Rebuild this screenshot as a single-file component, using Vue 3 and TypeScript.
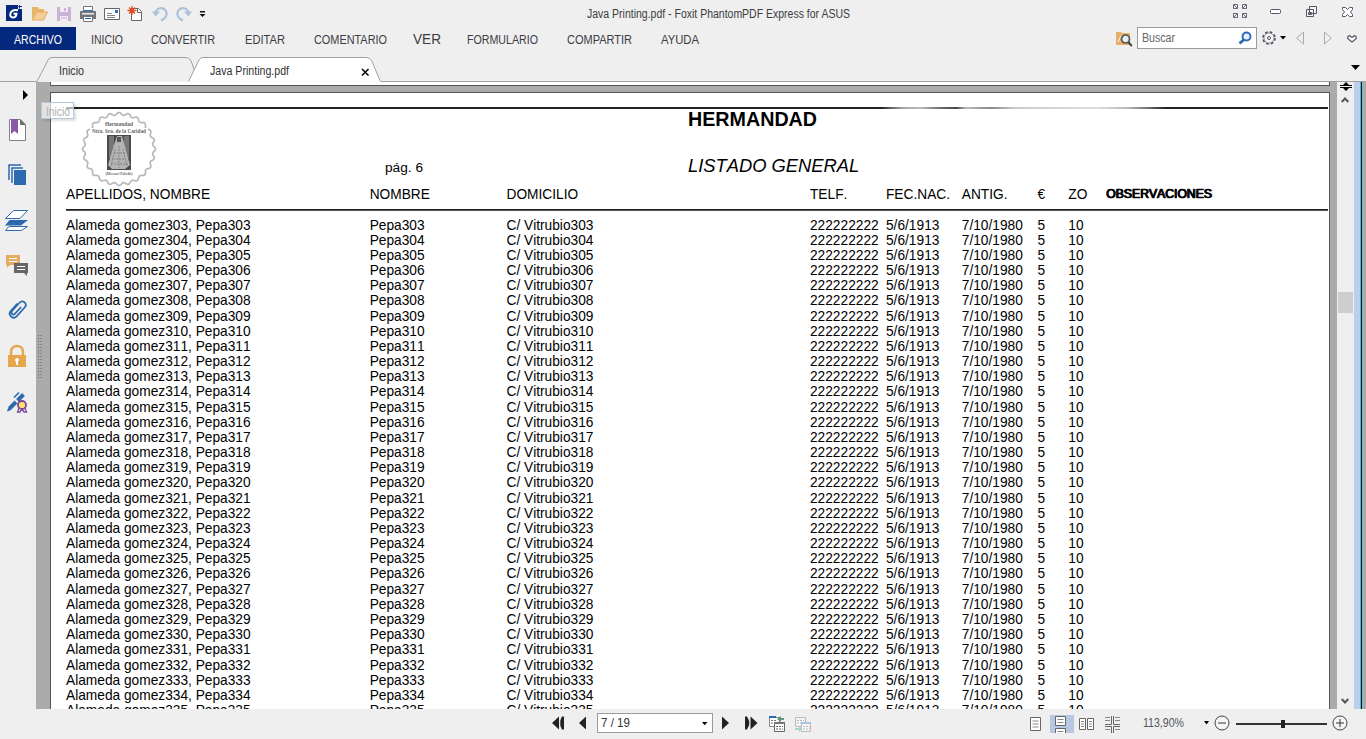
<script setup lang="ts">
import { h, type FunctionalComponent } from 'vue'

interface FitProps { text: string; w: number; size?: number; color?: string }

// Condensed interface label with a fixed advance width.
const Fit: FunctionalComponent<FitProps> = (p) =>
  h('svg', { width: p.w, height: 18, viewBox: `0 0 ${p.w} 18`, style: 'display:block;overflow:visible;flex:none' }, [
    h('text', {
      x: 0, y: 13, textLength: p.w, lengthAdjust: 'spacingAndGlyphs',
      'font-size': p.size ?? 12, fill: p.color ?? '#3c3c42',
      'font-family': '"Liberation Sans", Arial, sans-serif',
    }, p.text),
  ])
Fit.props = ['text', 'w', 'size', 'color']

const menu = [
  { t: 'INICIO', w: 32, gap: 15 },
  { t: 'CONVERTIR', w: 64, gap: 28 },
  { t: 'EDITAR', w: 40, gap: 30 },
  { t: 'COMENTARIO', w: 73, gap: 29 },
  { t: 'VER', w: 28, gap: 26, size: 14 },
  { t: 'FORMULARIO', w: 71, gap: 26 },
  { t: 'COMPARTIR', w: 65, gap: 29 },
  { t: 'AYUDA', w: 38, gap: 29 },
]

const rows = Array.from({ length: 33 }, (_, i) => 303 + i)

const sealPath = (() => {
  const pts: string[] = []
  for (let i = 0; i <= 360; i++) {
    const a = (i * Math.PI) / 180
    const r = 35.2 + 1.3 * Math.cos(a * 24)
    pts.push(`${(38 + r * Math.cos(a)).toFixed(2)} ${(38 + r * Math.sin(a)).toFixed(2)}`)
  }
  return 'M' + pts.join('L') + 'Z'
})()
</script>

<template>
  <div class="window">
    <header class="titlebar">
      <div class="quick">
        <svg class="app" width="28" height="24" viewBox="0 0 28 24"><path d="M6 3H18V7H22V19H6Z" fill="#05287f"/><path d="M19.500 3v3.500M18.500 4.500h3.500" stroke="#05287f" stroke-width="1" fill="none"/><path d="M18 8.200C13 7.200 10.300 9.500 10.200 12.500c-.1 3.800 5.800 4.200 6.300-.7H13.500" stroke="#fff" stroke-width="2" fill="none"/></svg>
        <svg width="24" height="24"><path d="M6 18V5h6l1 2h5v3H10l-4 8" fill="#e9b56b"/><path d="M6.500 18 10.500 10h11l-4 8z" fill="#f6cf98" stroke="#e5aa57"/></svg>
        <svg width="24" height="24"><path d="M5 5h14v14H5z" fill="#c9b3d6"/><path d="M8 5h8v5H8zM8 14h8v5H8z" fill="#f0eaf3"/><path d="M12 6h2v3h-2z" fill="#c9b3d6"/><path d="M9 16h6" stroke="#c9b3d6"/></svg>
        <svg width="24" height="24"><path d="M4 9h16v8H4z" fill="#75757a"/><path d="M7.500 4.500h9V9h-9z" fill="#fff" stroke="#75757a"/><path d="M6 11h12v1.500H6z" fill="#eee"/><path d="M7.500 14.500h9v5h-9z" fill="#fff" stroke="#75757a"/><path d="M9 16.500h6M7 8.500h10" stroke="#2b70b4"/></svg>
        <svg width="24" height="24"><path d="M4.500 6.500h15v11h-15z" fill="#fff" stroke="#65656a"/><path d="M7 11.500h5M7 13.500h8M7 15.500h8" stroke="#86868a"/><path d="M15 8h3v3h-3z" fill="#2b70b4"/></svg>
        <svg width="24" height="24"><path d="M7.500 6.500h7l3 3v9h-10z" fill="#fff" stroke="#65656a"/><path d="M13.500 6v4.500h4" fill="none" stroke="#65656a"/><path d="M8 4v9M3.500 8.500h9M5 5.500l6 6M11 5.500l-6 6" stroke="#df4e20" stroke-width="1.300"/></svg>
        <svg width="24" height="24"><path d="M7 11C9 5.500 15 4.500 18 9c2 4-1 8-5 9.500" fill="none" stroke="#a9c2d9" stroke-width="2.200"/><path d="M4 9.500h8l-4.500 5z" fill="#a9c2d9"/></svg>
        <svg width="24" height="24"><path d="M17 11C15 5.500 9 4.500 6 9c-2 4 1 8 5 9.500" fill="none" stroke="#a9c2d9" stroke-width="2.200"/><path d="M20 9.500h-8l4.500 5z" fill="#a9c2d9"/></svg>
        <svg width="14" height="24"><path d="M4 9h5v1.500H4zM3.500 12h6l-3 3z" fill="#111"/></svg>
      </div>
      <Fit class="caption" text="Java Printing.pdf - Foxit PhantomPDF Express for ASUS" :w="263" :size="12" />
      <div class="controls">
        <svg width="14" height="14"><g fill="none" stroke="#55556a"><path d="M.5.500h4v4h-4zM9.500.500h4v4h-4zM.5 9.500h4v4h-4zM9.500 9.500h4v4h-4z" stroke-width=".9"/><path d="M1 1l3 3M13 1l-3 3M1 13l3-3M13 13l-3-3" stroke-width=".8"/></g></svg>
        <svg width="12" height="14"><rect x=".5" y="5.500" width="10" height="4" rx="1" fill="#fff" stroke="#55556a"/></svg>
        <svg width="12" height="14"><g fill="#f4f4f4" stroke="#55556a"><path d="M3.500 2.500h7v7h-7zM.500 5.500h7v7h-7zM2.500 8.500h3v2h-3z"/></g></svg>
        <svg width="12" height="14"><path d="M.5 3.500h3l2 2 2-2h3v2l-2 2.500 2 2.500v2h-3l-2-2-2 2h-3v-2l2-2.500-2-2.500z" fill="#fff" stroke="#55556a"/></svg>
      </div>
    </header>

    <nav class="menubar">
      <div class="file"><Fit text="ARCHIVO" :w="48" color="#fff" /></div>
      <div v-for="m in menu" :key="m.t" :style="{ marginLeft: m.gap + 'px' }"><Fit :text="m.t" :w="m.w" :size="m.size" /></div>
      <div class="tools">
        <svg width="17" height="18"><path d="M0 3h5l1 1h8v12H0z" fill="#e8b066"/><path d="M2 13l3-6h5" stroke="#fff" fill="none"/><circle cx="9.500" cy="10" r="4" fill="#e6edf2" stroke="#555" stroke-width="1.700"/><path d="M12.300 13l3.500 4" stroke="#444" stroke-width="2"/></svg>
        <div class="search">
          <Fit text="Buscar" :w="33" color="#65656a" />
          <svg width="14" height="14"><circle cx="8.500" cy="5.500" r="4" fill="#e6f1fb" stroke="#2968b4" stroke-width="1.900"/><path d="M6 8.500 1.500 12.500" stroke="#2968b4" stroke-width="2.800"/></svg>
        </div>
        <svg class="gear" width="16" height="16"><circle cx="8" cy="8" r="6" fill="#f7f7f7" stroke="#4e4e5c" stroke-width="1.600" stroke-dasharray="2.700 2"/><circle cx="8" cy="8" r="5" fill="none" stroke="#77778a" stroke-width=".8"/><circle cx="8" cy="8" r="1.500" fill="#fff" stroke="#4e4e5c"/></svg>
        <svg class="drop" width="6" height="4"><path d="M0 0h6L3 3.500z"/></svg>
        <svg class="prev" width="8" height="14"><path d="M7.500 1v12L.7 7z" fill="none" stroke="#aaa"/></svg>
        <svg class="next" width="8" height="14"><path d="M.5 1v12L7.300 7z" fill="none" stroke="#aaa"/></svg>
        <svg class="heart" width="10" height="9"><path d="M.7 3 2.500 1.500 5 3.500l2.500-2L9.300 3v1.500L5 8 .7 4.500z" fill="#fff" stroke="#55556a" stroke-width="1.200"/></svg>
      </div>
    </nav>

    <div class="tabs">
      <svg class="tabshape" width="1366" height="25"><path d="M0 24.500H37L48 3q1-2.500 4-2.500H185q4 0 6 3l3 9" fill="none" stroke="#a0a0a0"/><path d="M188.500 24.500 199 3q1.500-2.500 4-2.500H366q4 0 5.500 3L380.500 24.500" fill="#fff" stroke="#a0a0a0"/><path d="M381 24.500H1366" stroke="#a0a0a0"/></svg>
      <div class="tabtext one"><Fit text="Inicio" :w="25" color="#333" /></div>
      <div class="tabtext two"><Fit text="Java Printing.pdf" :w="79" color="#333" /></div>
      <svg class="close" width="9" height="9"><path d="M1 1l6.500 6.500M7.500 1 1 7.500" stroke="#000" stroke-width="1.500"/></svg>
      <svg class="more" width="10" height="6"><path d="M0 0h9L4.500 5z"/></svg>
    </div>

    <main class="body">
      <aside class="side">
        <svg class="expand" width="6" height="10"><path d="M0 0v10l5-5z"/></svg>
        <svg class="s1" width="24" height="24"><path d="M4.500 1.500H15l5.500 5V22.500h-16z" fill="#fff" stroke="#818181"/><path d="M15 1v6h6z" fill="#6f6f6f"/><path d="M6 1h7v15l-3.500-3L6 16z" fill="#8b57a7"/></svg>
        <svg class="s2" width="24" height="24"><path d="M4 17V2h12M7 20V5h11" fill="none" stroke="#2c6aaf" stroke-width="1.500"/><path d="M9 7h12v15H9z" fill="#2c6aaf"/></svg>
        <svg class="s3" width="26" height="24"><path d="M1.500 21.500 5 17.500H23.500L17.500 21.500z" fill="#fff" stroke="#2c6aaf"/><path d="M1 16.500 5.500 11H24l-7 5.500z" fill="#2c6aaf"/><path d="M1.500 9.500 9.500 1.500h14l-7.500 8z" fill="#fff" stroke="#2c6aaf"/></svg>
        <svg class="s4" width="24" height="24"><path d="M1 1h14v10H5l-3 3v-3H1z" fill="#e5ad61"/><path d="M9 9h14v10h-1v3l-3-3H9z" fill="#666"/><path d="M4 4.500h8M4 7.500h8M12 12.500h8M12 15.500h8" stroke="#fff"/></svg>
        <svg class="s5" width="24" height="24"><g transform="rotate(42 12 12)" fill="none" stroke="#2c6aaf" stroke-width="1.700"><path d="M8 7v10c0 5 8 5 8 0V5c0-5-7-5-7 0v11c0 3 4 3 4 0V7"/></g></svg>
        <svg class="s6" width="24" height="24"><path d="M6 12V8c0-8 12-8 12 0v4" fill="none" stroke="#e5a64c" stroke-width="2.500"/><path d="M3 11h18v12H3z" fill="#e5a64c"/><path d="M12 14a2 2 0 0 1 1 3.700V21h-2v-3.300A2 2 0 0 1 12 14" fill="#fff"/></svg>
        <svg class="s7" width="24" height="24"><path d="M2 21.500 3.300 17.200l3 2.800z" fill="#2c6aaf"/><path d="M4.500 18.500 11 12M12.500 10.500 18.500 4.500" stroke="#2c6aaf" stroke-width="4"/><path d="M9 7.500 14 2.500" stroke="#2c6aaf" stroke-width="1.600"/><path d="M14.500 17l-2 5h2.500l2-3 2 3h2.500l-2-5" fill="#efefef" stroke="#7f4798" stroke-width="1.300"/><circle cx="17" cy="15" r="4" fill="#ffe76c" stroke="#7f4798" stroke-width="1.800"/></svg>
      </aside>
      <div class="gutter"><svg width="5" height="44"><path d="M1.500 0v44M4 0v44" stroke="#666" stroke-dasharray="1 2"/></svg></div>
      <section class="viewport">
        <div class="prevpage"></div>
        <article class="page">
          <div class="rule top"></div>
          <div class="masthead">
            <svg class="seal" width="76" height="76" viewBox="0 0 76 76">
              <path :d="sealPath" fill="#fff" stroke="#b9b9b9" stroke-width="1.700"/>
              <path d="M9 17h58v6H9z" fill="#fff"/>
              <g font-family="Liberation Serif, serif" font-weight="bold" fill="#666" text-anchor="middle">
                <text x="38" y="15" font-size="6" textLength="28" lengthAdjust="spacingAndGlyphs">Hermandad</text>
                <text x="38" y="22" font-size="6" textLength="54" lengthAdjust="spacingAndGlyphs">Ntra. Sra. de la Caridad</text>
                <text x="38" y="64" font-size="4" textLength="27" lengthAdjust="spacingAndGlyphs">(Illescas/Toledo)</text>
              </g>
              <path d="M26 24h24v35H26z" fill="#4a4a4a"/>
              <path d="M28 25h5v22h-5zM43 25h5v22h-5z" fill="#777"/>
              <path d="M36 25h5l2 7 6 22-5 4H31l-4-4 6-20z" fill="#b4b4b4"/>
              <path d="M38 35v22M34 38l-4 17M42 38l4 17M32 48h13M33 42h11M30 53h17" stroke="#838383" stroke-width="1" stroke-dasharray="2 1"/>
              <path d="M36 26h4v5h-4z" fill="#555"/>
            </svg>
            <span class="pageno">pág. 6</span>
            <div class="heads"><h1>HERMANDAD</h1><h2>LISTADO GENERAL</h2></div>
          </div>
          <div class="row head"><span>APELLIDOS, NOMBRE</span><span>NOMBRE</span><span>DOMICILIO</span><span>TELF.</span><span>FEC.NAC.</span><span>ANTIG.</span><span>€</span><span>ZO</span><span class="obs">OBSERVACIONES</span></div>
          <div class="rule second"></div>
          <div class="list">
            <div v-for="n in rows" :key="n" class="row"><span>Alameda gomez{{ n }}, Pepa{{ n }}</span><span>Pepa{{ n }}</span><span>C/ Vitrubio{{ n }}</span><span>222222222</span><span>5/6/1913</span><span>7/10/1980</span><span>5</span><span>10</span></div>
          </div>
        </article>
        <div class="tooltip"><Fit text="Inicio" :w="24" color="#b0b0b0" /></div>
      </section>
      <div class="scroll">
        <svg width="12" height="9"><path d="M0 3h12v1H0zM0 5h12v1H0zM6 0l3 3H3zM6 9l3-3H3z"/></svg>
        <svg class="up" width="8" height="6"><path d="M.7 5 4 1.500 7.300 5" fill="none" stroke="#555" stroke-width="2"/></svg>
        <div class="thumb"></div>
        <svg class="down" width="8" height="6"><path d="M.7 1 4 4.500 7.300 1" fill="none" stroke="#555" stroke-width="2"/></svg>
      </div>
      <div class="edge"></div>
    </main>

    <footer class="status">
      <svg class="first" width="13" height="14"><path d="M7 .5v13L0 7zM12 .5v13h-2L7.800 9V5L10 .5z" fill="#222"/><path d="M7.700 0v14" stroke="#efefef" stroke-width="1.200"/></svg>
      <svg class="back" width="8" height="14"><path d="M7 .5v13L0 7z" fill="#222"/></svg>
      <div class="pagebox"><Fit text="7 / 19" :w="29" color="#333" /><svg width="6" height="4"><path d="M0 0h5.500L2.700 3.200z"/></svg></div>
      <svg class="fwd" width="8" height="14"><path d="M0 .5v13L7 7z" fill="#222"/></svg>
      <svg class="last" width="13" height="14"><path d="M0 .5h2L4.200 5v4L2 13.500H0zM5.500 .5v13L12.500 7z" fill="#222"/></svg>
      <svg class="v1" width="17" height="17"><path d="M.5 1.500h10v9H.5z" fill="#fff" stroke="#888"/><path d="M0 0h7v2H0z" fill="#2968b4"/><path d="M2 4.500h5M2 7h3" stroke="#777" stroke-dasharray="2 1"/><path d="M5.500 6.500h10v9h-10z" fill="#fff" stroke="#666"/><path d="M5 6h11v2H5z" fill="#777"/><path d="M7 10.500h7M7 13h7" stroke="#666" stroke-dasharray="2 1"/><path d="M8 3l4-3v2h3v2h-3v2z" fill="#579b78"/></svg>
      <svg class="v2" width="17" height="17"><path d="M.5 1.500h10v9H.5z" fill="#f4f4f4" stroke="#bbb"/><path d="M2 4.500h7M2 7h4" stroke="#bbb" stroke-dasharray="2 1"/><path d="M6.500 6.500h9v9h-9z" fill="#f6f6f6" stroke="#bbb"/><path d="M6 6h10v2H6z" fill="#a9c4dc"/><path d="M8 10.500h7M8 13h7" stroke="#bbb" stroke-dasharray="2 1"/><path d="M7 13l-3-3v2H0v2h4v2z" fill="#a6dac5"/></svg>
      <div class="right">
        <svg width="11" height="14"><path d="M.5.500h10v13H.5z" fill="#fff" stroke="#666"/><path d="M2.500 4h6M2.500 7h6M2.500 10h6" stroke="#888"/></svg>
        <div class="mode"><svg width="11" height="17"><path d="M.5.500h10v9H.5zM.5 17v-4.500h10V17" fill="#fff" stroke="#666"/><path d="M2.500 3.500h6M2.500 6.500h6M2.500 15.500h6" stroke="#888"/></svg></div>
        <svg class="facing" width="15" height="13"><path d="M.5.500h6v11h-6zM8.500.500h6v11h-6z" fill="#fff" stroke="#666"/><path d="M2 3.500h3M2 6h3M2 8.500h3M10 3.500h3M10 6h3M10 8.500h3" stroke="#888"/></svg>
        <svg class="cont" width="15" height="17"><path d="M6.500 0v8.500H0M8.500 0v8.500H15M0 10.500h6.500V17M15 10.500H8.500V17" fill="none" stroke="#666"/><path d="M0 1.500h5M0 4.500h5M10 1.500h5M10 4.500h5M0 13.500h5M10 13.500h5" stroke="#888"/></svg>
        <Fit class="pct" text="113,90%" :w="41" color="#55555c" />
        <svg class="pd" width="6" height="4"><path d="M0 0h5L2.500 3.500z"/></svg>
        <svg class="minus" width="16" height="16"><circle cx="8" cy="8" r="7" fill="#f5f5f5" stroke="#444"/><path d="M4 8h8" stroke="#333"/></svg>
        <div class="slider"><i></i></div>
        <svg class="plus" width="16" height="16"><circle cx="8" cy="8" r="7" fill="#f5f5f5" stroke="#444"/><path d="M4 8h8M8 4v8" stroke="#333"/></svg>
      </div>
    </footer>
  </div>
</template>

<style>
body { margin: 0; overflow: hidden; }
</style>
<style scoped>
* { box-sizing: border-box; }
svg { display: block; flex: none; }
.window { width: 1366px; height: 739px; display: flex; flex-direction: column; background: #efefef; font-family: "Liberation Sans", Arial, sans-serif; overflow: hidden; }
.titlebar { height: 27px; display: flex; flex: none; }
.quick { display: flex; width: 587px; padding-top: 2px; }
.quick svg:nth-child(2) { margin: 0 0 0 -2px; width: 26px; }
.caption { margin-top: 5px; }
.controls { display: flex; margin: 4px 0 0 383px; }
.controls svg:nth-child(2) { margin-left: 23px; }
.controls svg:nth-child(3) { margin-left: 24px; }
.controls svg:nth-child(4) { margin-left: 24px; }
.menubar { height: 23px; display: flex; flex: none; align-items: flex-start; }
.menubar > div { padding-top: 4px; }
.menubar .file { width: 76px; height: 23px; background: #05287f; padding-left: 14px; }
.menubar .tools { margin-left: auto; display: flex; padding: 0; height: 23px; width: 250px; }
.tools > svg:first-child { margin-top: 2px; }
.search { flex: none; margin-left: 4px; width: 120px; height: 22px; border: 1px solid #9b9b9b; background: #fff; display: flex; justify-content: space-between; padding: 1px 4px 0 4px; }
.search > svg:last-child { margin-top: 2px; }
.gear { margin: 3px 0 0 4px; }
.drop { margin: 9px 0 0 3px; }
.prev { margin: 4px 0 0 10px; }
.next { margin: 4px 0 0 20px; }
.heart { margin: 7px 0 0 15px; }
.tabs { margin-top: 7px; height: 25px; flex: none; position: relative; display: flex; }
.tabshape { position: absolute; left: 0; top: 0; }
.tabtext { position: relative; padding-top: 5px; }
.one { margin-left: 59px; }
.two { margin-left: 126px; }
.close { position: relative; margin: 11px 0 0 72px; }
.more { position: relative; margin: 8px 5px 0 auto; }
.body { height: 627px; flex: none; display: flex; background: #ababab; }
.side { width: 36px; background: #efefef; display: flex; flex-direction: column; }
.expand { margin: 8px 0 0 23px; }
.s1 { margin: 18px 0 0 5px; }
.s2 { margin: 21px 0 0 5px; }
.s3 { margin: 22px 0 0 4px; }
.s4 { margin: 21px 0 0 5px; }
.s5 { margin: 20px 0 0 5px; }
.s6 { margin: 22px 0 0 5px; }
.s7 { margin: 22px 0 0 5px; }
.gutter { width: 14px; padding: 253px 0 0 1px; }
.viewport { width: 1280px; height: 627px; overflow: visible; position: relative; display: flex; flex-direction: column; }
.prevpage { height: 4px; flex: none; background: #fff; border: 1px solid #555; border-top: 0; }
.page { margin-top: 6px; height: 617px; overflow: hidden; background: #fff; border: 1px solid #555; border-bottom: 0; color: #000; font-kerning: none; }
.rule { margin-left: 15px; margin-right: 1px; height: 2px; background: linear-gradient(#222 50%, #555 50%); }
.rule.top { margin-top: 14px; background: linear-gradient(90deg, #222 0 815px, #555 823px, #aaa 838px, #bbb 855px, #777 871px, #444 890px, #bbb 900px, #888 925px, #ccc 950px, #ddd 1030px, #bbb 1060px, #777 1080px, #222 1100px); }
.masthead { height: 76px; display: flex; }
.seal { margin: 2px 0 0 30px; }
.pageno { font-size: 13.7px; line-height: 16px; width: 303px; margin: 51px 0 0 228px; }
.heads { width: 400px; }
h1 { margin: -1px 0 0; font-size: 19.7px; line-height: 22px; }
h2 { margin: 25px 0 0; font-size: 18.35px; line-height: 22px; font-weight: 400; font-style: italic; white-space: nowrap; }
.row { display: grid; grid-template-columns: 303.700px 136.800px 303.500px 76px 75.800px 75.800px 30.700px 38px 150px; margin-left: 15px; height: 15.172px; line-height: 15.172px; font-size: 13.730px; white-space: nowrap; }
.list .row:nth-child(30) { position: relative; top: .3px; }
.head { margin-top: 2px; height: 22px; line-height: 15px; font-size: 13.730px; }
.obs { font-size: 12.200px; text-shadow: .6px 0 #000, -.5px 0 #000; -webkit-text-stroke: .4px #000; }
.rule.second { margin-top: 0; }
.list { margin-top: 6.5px; }
.tooltip { position: absolute; left: -9px; top: 20px; width: 33px; height: 17px; border: 1px solid #b4c8db; background: rgba(255,255,255,.65); box-shadow: 2px 2px 2px rgba(0,0,0,.12); padding-left: 4px; }
.scroll { margin-left: 7px; width: 17px; background: #efefef; display: flex; flex-direction: column; padding: 0 0 0 3px; }
.up { margin: 6px 0 0 1px; }
.thumb { margin: 189px 0 0 -2px; width: 15px; height: 21px; background: #cdcecf; }
.down { margin: auto 0 5px 1px; }
.edge { width: 8px; background: linear-gradient(90deg, #b8d0ec 0 6px, #30c3ee 6px 7px, #111 7px 8px); }
.status { height: 30px; flex: none; display: flex; align-items: flex-start; }
.first { margin: 7px 0 0 552px; }
.back { margin: 7px 0 0 14px; }
.pagebox { margin: 4px 0 0 10px; width: 116px; height: 20px; border: 1px solid #9b9b9b; background: #fff; display: flex; justify-content: space-between; padding: 0 1px 0 3px; }
.pagebox > svg:last-child { margin: 8px 3px 0 0; }
.fwd { margin: 7px 0 0 9px; }
.last { margin: 7px 0 0 15px; }
.v1 { margin: 7px 0 0 11px; }
.v2 { margin: 7px 0 0 9px; }
.right { margin-left: auto; width: 336px; display: flex; padding-top: 6px; }
.right > svg:first-child { margin-top: 2px; }
.mode { width: 24px; height: 18px; margin-left: 9px; padding: 1px 0 0 5px; background: #b9c8e2; }
.facing { margin: 3px 0 0 5px; }
.cont { margin: 1px 0 0 11px; }
.pct { margin: -1px 0 0 23px; }
.pd { margin: 6px 0 0 20px; }
.minus { margin: 0 0 0 4px; }
.slider { width: 91px; height: 2px; background: #333; margin: 8px 0 0 6px; }
.slider i { display: block; width: 4px; height: 8px; background: #222; margin-left: 45px; transform: translateY(-3px); }
.plus { margin-left: 5px; }
</style>
